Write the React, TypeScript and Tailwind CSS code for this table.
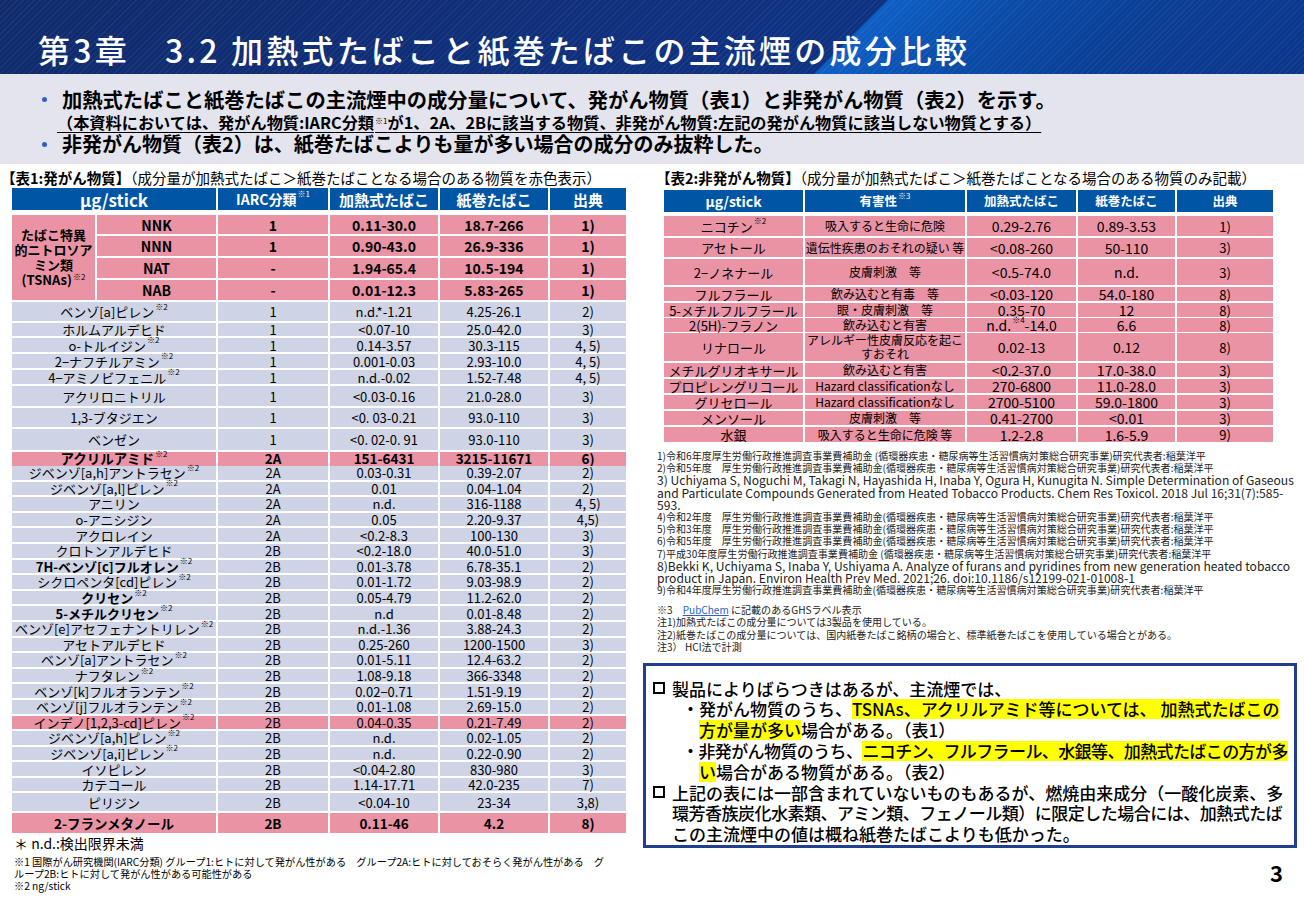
import React from "react";

const FONT = "font-['Noto_Sans_CJK_JP','Noto_Sans_CJK_SC',sans-serif]";
const PINK = "bg-[#e993a5]";
const GRAY = "bg-[#ced4e5]";

function Sup({ children }: { children: React.ReactNode }) {
  return <span className="relative -top-[5px] ml-[1px] text-[8px] font-normal">{children}</span>;
}

function Cell({ className = "", children }: { className?: string; children?: React.ReactNode }) {
  return (
    <div className={`flex items-center justify-center whitespace-nowrap leading-none ${className}`}>{children}</div>
  );
}

type Row1 = {
  name: React.ReactNode;
  iarc: string;
  heat: string;
  cig: string;
  ref: string;
  h: string;
  pink?: boolean;
  bold?: boolean;
  nameBold?: boolean;
};

const s2 = <Sup>※2</Sup>;

const tsnas: Row1[] = [
  { name: "NNK", iarc: "1", heat: "0.11-30.0", cig: "18.7-266", ref: "1)", h: "h-[19px]" },
  { name: "NNN", iarc: "1", heat: "0.90-43.0", cig: "26.9-336", ref: "1)", h: "h-[20px]" },
  { name: "NAT", iarc: "-", heat: "1.94-65.4", cig: "10.5-194", ref: "1)", h: "h-[20px]" },
  { name: "NAB", iarc: "-", heat: "0.01-12.3", cig: "5.83-265", ref: "1)", h: "h-[20px]" },
];

const rows1: Row1[] = [
  { name: <>ベンゾ[a]ピレン{s2}</>, iarc: "1", heat: "n.d.*-1.21", cig: "4.25-26.1", ref: "2)", h: "h-[19px]" },
  { name: "ホルムアルデヒド", iarc: "1", heat: "<0.07-10", cig: "25.0-42.0", ref: "3)", h: "h-[13px]" },
  { name: <>o-トルイジン{s2}</>, iarc: "1", heat: "0.14-3.57", cig: "30.3-115", ref: "4, 5)", h: "h-[14px]" },
  { name: <>2−ナフチルアミン{s2}</>, iarc: "1", heat: "0.001-0.03", cig: "2.93-10.0", ref: "4, 5)", h: "h-[14px]" },
  { name: <>4−アミノビフェニル{s2}</>, iarc: "1", heat: "n.d.-0.02", cig: "1.52-7.48", ref: "4, 5)", h: "h-[14px]" },
  { name: "アクリロニトリル", iarc: "1", heat: "<0.03-0.16", cig: "21.0-28.0", ref: "3)", h: "h-[20px]" },
  { name: "1,3-ブタジエン", iarc: "1", heat: "<0. 03-0.21", cig: "93.0-110", ref: "3)", h: "h-[19px]" },
  { name: "ベンゼン", iarc: "1", heat: "<0. 02-0. 91", cig: "93.0-110", ref: "3)", h: "h-[21px]" },
  { name: <>アクリルアミド{s2}</>, iarc: "2A", heat: "151-6431", cig: "3215-11671", ref: "6)", h: "h-[12px]", pink: true, bold: true },
  { name: <>ジベンゾ[a,h]アントラセン{s2}</>, iarc: "2A", heat: "0.03-0.31", cig: "0.39-2.07", ref: "2)", h: "h-[13.6px]" },
  { name: <>ジベンゾ[a,l]ピレン{s2}</>, iarc: "2A", heat: "0.01", cig: "0.04-1.04", ref: "2)", h: "h-[13.6px]" },
  { name: "アニリン", iarc: "2A", heat: "n.d.", cig: "316-1188", ref: "4, 5)", h: "h-[13.6px]" },
  { name: "o-アニシジン", iarc: "2A", heat: "0.05", cig: "2.20-9.37", ref: "4,5)", h: "h-[13.6px]" },
  { name: "アクロレイン", iarc: "2A", heat: "<0.2-8.3", cig: "100-130", ref: "3)", h: "h-[13.6px]" },
  { name: "クロトンアルデヒド", iarc: "2B", heat: "<0.2-18.0", cig: "40.0-51.0", ref: "3)", h: "h-[13.6px]" },
  { name: <>7H-ベンゾ[c]フルオレン{s2}</>, iarc: "2B", heat: "0.01-3.78", cig: "6.78-35.1", ref: "2)", h: "h-[13.6px]", nameBold: true },
  { name: <>シクロペンタ[cd]ピレン{s2}</>, iarc: "2B", heat: "0.01-1.72", cig: "9.03-98.9", ref: "2)", h: "h-[13.6px]" },
  { name: <>クリセン{s2}</>, iarc: "2B", heat: "0.05-4.79", cig: "11.2-62.0", ref: "2)", h: "h-[13.6px]", nameBold: true },
  { name: <>5-メチルクリセン{s2}</>, iarc: "2B", heat: "n.d", cig: "0.01-8.48", ref: "2)", h: "h-[13.6px]", nameBold: true },
  { name: <>ベンゾ[e]アセフェナントリレン{s2}</>, iarc: "2B", heat: "n.d.-1.36", cig: "3.88-24.3", ref: "2)", h: "h-[13.6px]" },
  { name: "アセトアルデヒド", iarc: "2B", heat: "0.25-260", cig: "1200-1500", ref: "3)", h: "h-[13.6px]" },
  { name: <>ベンゾ[a]アントラセン{s2}</>, iarc: "2B", heat: "0.01-5.11", cig: "12.4-63.2", ref: "2)", h: "h-[13.6px]" },
  { name: <>ナフタレン{s2}</>, iarc: "2B", heat: "1.08-9.18", cig: "366-3348", ref: "2)", h: "h-[13.6px]" },
  { name: <>ベンゾ[k]フルオランテン{s2}</>, iarc: "2B", heat: "0.02−0.71", cig: "1.51-9.19", ref: "2)", h: "h-[13.6px]" },
  { name: <>ベンゾ[j]フルオランテン{s2}</>, iarc: "2B", heat: "0.01-1.08", cig: "2.69-15.0", ref: "2)", h: "h-[13.6px]" },
  { name: <>インデノ[1,2,3-cd]ピレン{s2}</>, iarc: "2B", heat: "0.04-0.35", cig: "0.21-7.49", ref: "2)", h: "h-[13.6px]", pink: true },
  { name: <>ジベンゾ[a,h]ピレン{s2}</>, iarc: "2B", heat: "n.d.", cig: "0.02-1.05", ref: "2)", h: "h-[13.6px]" },
  { name: <>ジベンゾ[a,i]ピレン{s2}</>, iarc: "2B", heat: "n.d.", cig: "0.22-0.90", ref: "2)", h: "h-[13.6px]" },
  { name: "イソピレン", iarc: "2B", heat: "<0.04-2.80", cig: "830-980", ref: "3)", h: "h-[13.6px]" },
  { name: "カテコール", iarc: "2B", heat: "1.14-17.71", cig: "42.0-235", ref: "7)", h: "h-[13.6px]" },
  { name: "ピリジン", iarc: "2B", heat: "<0.04-10", cig: "23-34", ref: "3,8)", h: "h-[18px]" },
  { name: "2-フランメタノール", iarc: "2B", heat: "0.11-46", cig: "4.2", ref: "8)", h: "h-[20px]", pink: true, bold: true },
];

type Row2 = { name: React.ReactNode; hz: React.ReactNode; heat: React.ReactNode; cig: string; ref: string; h: string };

const rows2: Row2[] = [
  { name: <>ニコチン{s2}</>, hz: "吸入すると生命に危険", heat: "0.29-2.76", cig: "0.89-3.53", ref: "1)", h: "h-[20px]" },
  { name: "アセトール", hz: "遺伝性疾患のおそれの疑い 等", heat: "<0.08-260", cig: "50-110", ref: "3)", h: "h-[19px]" },
  { name: "2−ノネナール", hz: "皮膚刺激　等", heat: "<0.5-74.0", cig: "n.d.", ref: "3)", h: "h-[26px]" },
  { name: "フルフラール", hz: "飲み込むと有毒　等", heat: "<0.03-120", cig: "54.0-180", ref: "8)", h: "h-[14px]" },
  { name: "5-メチルフルフラール", hz: "眼・皮膚刺激　等", heat: "0.35-70", cig: "12", ref: "8)", h: "h-[13px]" },
  { name: "2(5H)-フラノン", hz: "飲み込むと有害", heat: <>n.d. <Sup>※4</Sup>-14.0</>, cig: "6.6", ref: "8)", h: "h-[13px]" },
  {
    name: "リナロール",
    hz: (
      <span className="text-center leading-[14px]">
        アレルギー性皮膚反応を起こ
        <br />
        すおそれ
      </span>
    ),
    heat: "0.02-13",
    cig: "0.12",
    ref: "8)",
    h: "h-[28px]",
  },
  { name: "メチルグリオキサール", hz: "飲み込むと有害", heat: "<0.2-37.0", cig: "17.0-38.0", ref: "3)", h: "h-[14px]" },
  { name: "プロピレングリコール", hz: "Hazard classificationなし", heat: "270-6800", cig: "11.0-28.0", ref: "3)", h: "h-[14px]" },
  { name: "グリセロール", hz: "Hazard classificationなし", heat: "2700-5100", cig: "59.0-1800", ref: "3)", h: "h-[14px]" },
  { name: "メンソール", hz: "皮膚刺激　等", heat: "0.41-2700", cig: "<0.01", ref: "3)", h: "h-[14px]" },
  { name: "水銀", hz: "吸入すると生命に危険 等", heat: "1.2-2.8", cig: "1.6-5.9", ref: "9)", h: "h-[15px]" },
];

const refs: { t: React.ReactNode; en?: boolean }[] = [
  { t: "1)令和6年度厚生労働行政推進調査事業費補助金 (循環器疾患・糖尿病等生活習慣病対策総合研究事業)研究代表者:稲葉洋平" },
  { t: "2)令和5年度　厚生労働行政推進調査事業費補助金(循環器疾患・糖尿病等生活習慣病対策総合研究事業)研究代表者:稲葉洋平" },
  { t: "3) Uchiyama S, Noguchi M, Takagi N, Hayashida H, Inaba Y, Ogura H, Kunugita N. Simple Determination of Gaseous", en: true },
  { t: "and Particulate Compounds Generated from Heated Tobacco Products. Chem Res Toxicol. 2018 Jul 16;31(7):585-", en: true },
  { t: "593.", en: true },
  { t: "4)令和2年度　厚生労働行政推進調査事業費補助金(循環器疾患・糖尿病等生活習慣病対策総合研究事業)研究代表者:稲葉洋平" },
  { t: "5)令和3年度　厚生労働行政推進調査事業費補助金(循環器疾患・糖尿病等生活習慣病対策総合研究事業)研究代表者:稲葉洋平" },
  { t: "6)令和5年度　厚生労働行政推進調査事業費補助金(循環器疾患・糖尿病等生活習慣病対策総合研究事業)研究代表者:稲葉洋平" },
  { t: "7)平成30年度厚生労働行政推進調査事業費補助金 (循環器疾患・糖尿病等生活習慣病対策総合研究事業)研究代表者:稲葉洋平" },
  { t: "8)Bekki K, Uchiyama S, Inaba Y, Ushiyama A. Analyze of furans and pyridines from new generation heated tobacco", en: true },
  { t: "product in Japan. Environ Health Prev Med. 2021;26. doi:10.1186/s12199-021-01008-1", en: true },
  { t: "9)令和4年度厚生労働行政推進調査事業費補助金(循環器疾患・糖尿病等生活習慣病対策総合研究事業)研究代表者:稲葉洋平" },
];

const notes: React.ReactNode[] = [
  <>
    ※3　<span className="text-[#2a62c9] underline">PubChem</span> に記載のあるGHSラベル表示
  </>,
  "注1)加熱式たばこの成分量については3製品を使用している。",
  "注2)紙巻たばこの成分量については、国内紙巻たばこ銘柄の場合と、標準紙巻たばこを使用している場合とがある。",
  "注3） HCl法で計測",
];

function Hl({ children }: { children: React.ReactNode }) {
  return <span className="inline-block bg-[#ffff00] leading-[20px]">{children}</span>;
}

function Box() {
  return <span className="mr-[7px] inline-block h-[12px] w-[12px] shrink-0 border-2 border-black" />;
}

function Table1() {
  const cols = "grid grid-cols-[110px_108px_108px_76px] gap-x-[2px]";
  return (
    <div className="ml-[12px] w-[614px]">
      <div className="mb-[5px] grid h-[22px] grid-cols-[204px_110px_108px_108px_76px] gap-x-[2px] font-bold text-white">
        <Cell className="bg-[#0055a5] text-[17px]">μg/stick</Cell>
        <Cell className="bg-[#0055a5] text-[14px]">
          IARC分類<Sup>※1</Sup>
        </Cell>
        <Cell className="bg-[#0055a5] text-[15px]">加熱式たばこ</Cell>
        <Cell className="bg-[#0055a5] text-[15px]">紙巻たばこ</Cell>
        <Cell className="bg-[#0055a5] text-[15px]">出典</Cell>
      </div>
      <div className="flex flex-col gap-y-[2px]">
        <div className="flex gap-x-[2px]">
          <div className={`flex w-[83px] items-center justify-center text-center text-[13px] font-bold leading-[15px] ${PINK}`}>
            <span>
              たばこ特異
              <br />
              的ニトロソア
              <br />
              ミン類
              <br />
              (TSNAs)<Sup>※2</Sup>
            </span>
          </div>
          <div className="flex flex-col gap-y-[2px]">
            {tsnas.map((r) => (
              <div key={r.name as string} className={`grid grid-cols-[119px_110px_108px_108px_76px] gap-x-[2px] text-[14px] font-bold ${r.h}`}>
                <Cell className={PINK}>{r.name}</Cell>
                <Cell className={PINK}>{r.iarc}</Cell>
                <Cell className={PINK}>{r.heat}</Cell>
                <Cell className={PINK}>{r.cig}</Cell>
                <Cell className={PINK}>{r.ref}</Cell>
              </div>
            ))}
          </div>
        </div>
        {rows1.map((r, i) => {
          const bg = r.pink ? PINK : GRAY;
          const txt = r.bold ? "font-bold text-[13.5px]" : "text-[13px]";
          return (
            <div key={i} className={`grid grid-cols-[204px_402px] gap-x-[2px] ${txt} ${r.h}`}>
              <Cell className={`${bg} ${r.nameBold ? "font-bold" : ""}`}>{r.name}</Cell>
              <div className={cols}>
                <Cell className={bg}>{r.iarc}</Cell>
                <Cell className={bg}>{r.heat}</Cell>
                <Cell className={bg}>{r.cig}</Cell>
                <Cell className={bg}>{r.ref}</Cell>
              </div>
            </div>
          );
        })}
      </div>
    </div>
  );
}

function Table2() {
  const grid = "grid grid-cols-[139px_160px_109px_97px_96px] gap-x-[2px]";
  return (
    <div className="ml-[21px] mt-[2px] w-[609px]">
      <div className={`${grid} mb-[4px] h-[22px] text-[12.5px] font-bold text-white`}>
        <Cell className="bg-[#0055a5] text-[14px]">μg/stick</Cell>
        <Cell className="bg-[#0055a5]">
          有害性<Sup>※3</Sup>
        </Cell>
        <Cell className="bg-[#0055a5]">加熱式たばこ</Cell>
        <Cell className="bg-[#0055a5]">紙巻たばこ</Cell>
        <Cell className="bg-[#0055a5]">出典</Cell>
      </div>
      <div className="flex flex-col gap-y-[2px]">
        {rows2.map((r, i) => (
          <div key={i} className={`${grid} ${r.h}`}>
            <Cell className={`${PINK} text-[13px]`}>{r.name}</Cell>
            <Cell className={`${PINK} text-[12px]`}>{r.hz}</Cell>
            <Cell className={`${PINK} text-[14px]`}>{r.heat}</Cell>
            <Cell className={`${PINK} text-[14px]`}>{r.cig}</Cell>
            <Cell className={`${PINK} text-[13px]`}>{r.ref}</Cell>
          </div>
        ))}
      </div>
    </div>
  );
}

export default function App() {
  return (
    <div className={`relative h-[898px] w-[1304px] overflow-hidden bg-white text-black ${FONT}`}>
      {/* Title bar: diagonal gradient band + fine stripes */}
      <header className="h-[74px] bg-[linear-gradient(135deg,#102b6c_0%,#0e3182_64.3%,#0d5fc6_64.6%,#0a4eac_72%,#0a3e95_84%,#0a3689_100%)]">
        <div className="flex h-full items-end bg-[repeating-linear-gradient(135deg,#ffffff10_0px,#ffffff10_1px,#ffffff00_1px,#ffffff00_4px)] pb-[5px] pl-[38px]">
          <h1 className="whitespace-nowrap text-[32px] font-medium leading-[40px] tracking-[3.2px] text-white">
            第3章　3.2 加熱式たばこと紙巻たばこの主流煙の成分比較
          </h1>
        </div>
      </header>

      {/* Summary panel */}
      <section className="h-[90px] bg-[#e4e4ee] pl-[42px] pt-[13px]">
        <div className="flex h-[24px] items-center whitespace-nowrap text-[20.3px] font-bold leading-[24px]">
          <span className="mr-[15px] h-[5px] w-[5px] rounded-full bg-[#2d5fc4]" />
          加熱式たばこと紙巻たばこの主流煙中の成分量について、発がん物質（表1）と非発がん物質（表2）を示す。
        </div>
        <div className="ml-[15px] h-[22px] whitespace-nowrap text-[16.2px] font-bold leading-[22px] underline decoration-1 underline-offset-[3px]">
          （本資料においては、発がん物質:IARC分類<Sup>※1</Sup>が1、2A、2Bに該当する物質、非発がん物質:左記の発がん物質に該当しない物質とする）
        </div>
        <div className="flex h-[22px] items-center whitespace-nowrap text-[20px] font-bold leading-[22px]">
          <span className="mr-[15px] h-[5px] w-[5px] rounded-full bg-[#2d5fc4]" />
          非発がん物質（表2）は、紙巻たばこよりも量が多い場合の成分のみ抜粋した。
        </div>
      </section>

      <div className="flex">
        {/* Left column */}
        <div className="w-[626px] pt-[4px]">
          <div className="whitespace-nowrap pl-[1px] text-[14.5px] leading-[20px]">
            <span className="font-bold">【表1:発がん物質】</span>（成分量が加熱式たばこ＞紙巻たばことなる場合のある物質を赤色表示）
          </div>
          <Table1 />
          <div className="mt-[2px] pl-[14px]">
            <div className="text-[14px] leading-[16px]">＊ n.d.:検出限界未満</div>
            <div className="mt-[5px] text-[10.2px] leading-[12px]">
              ※1 国際がん研究機関(IARC分類) グループ1:ヒトに対して発がん性がある　グループ2A:ヒトに対しておそらく発がん性がある　グ
              <br />
              ループ2B:ヒトに対して発がん性がある可能性がある
              <br />
              ※2 ng/stick
            </div>
          </div>
        </div>

        {/* Right column */}
        <div className="ml-[17px] w-[654px] pt-[4px]">
          <div className="whitespace-nowrap pl-[13px] text-[14.5px] leading-[20px]">
            <span className="font-bold">【表2:非発がん物質】</span>（成分量が加熱式たばこ＞紙巻たばことなる場合のある物質のみ記載）
          </div>
          <Table2 />

          <div className="ml-[14px] mt-[8px] text-[#222]">
            {refs.map((r, i) => (
              <div key={i} className={`h-[12.2px] whitespace-nowrap leading-[12.2px] ${r.en ? "text-[12.1px]" : "text-[10.05px]"}`}>
                {r.t}
              </div>
            ))}
            <div className="h-[8px]" />
            {notes.map((n, i) => (
              <div key={i} className="h-[12.2px] whitespace-nowrap text-[10.05px] leading-[12.2px]">
                {n}
              </div>
            ))}
          </div>

          {/* Conclusion box */}
          <div className="mt-[10px] h-[185px] w-[654px] border-[3px] border-[#203f8f] pl-[7px] pt-[12px] text-[17px] font-medium">
            <div className="flex h-[20.8px] items-center whitespace-nowrap">
              <Box />
              製品によりばらつきはあるが、主流煙では、
            </div>
            <div className="flex h-[20.8px] items-center whitespace-nowrap pl-[29px]">
              ・発がん物質のうち、<Hl>TSNAs、アクリルアミド等については、 加熱式たばこの</Hl>
            </div>
            <div className="flex h-[20.8px] items-center whitespace-nowrap pl-[46px]">
              <Hl>方が量が多い</Hl>場合がある。（表1）
            </div>
            <div className="flex h-[20.8px] items-center whitespace-nowrap pl-[29px] tracking-[-0.6px]">
              ・非発がん物質のうち、<Hl>ニコチン、フルフラール、水銀等、加熱式たばこの方が多</Hl>
            </div>
            <div className="flex h-[20.8px] items-center whitespace-nowrap pl-[46px]">
              <Hl>い</Hl>場合がある物質がある。（表2）
            </div>
            <div className="flex h-[20.8px] items-center whitespace-nowrap">
              <Box />
              上記の表には一部含まれていないものもあるが、燃焼由来成分（一酸化炭素、多
            </div>
            <div className="flex h-[20.8px] items-center whitespace-nowrap pl-[19px] tracking-[-0.5px]">
              環芳香族炭化水素類、アミン類、フェノール類）に限定した場合には、加熱式たば
            </div>
            <div className="flex h-[20.8px] items-center whitespace-nowrap pl-[19px]">
              この主流煙中の値は概ね紙巻たばこよりも低かった。
            </div>
          </div>

          <div className="mt-[12px] pr-[14px] text-right text-[22px] font-bold leading-[24px]">3</div>
        </div>
      </div>
    </div>
  );
}
